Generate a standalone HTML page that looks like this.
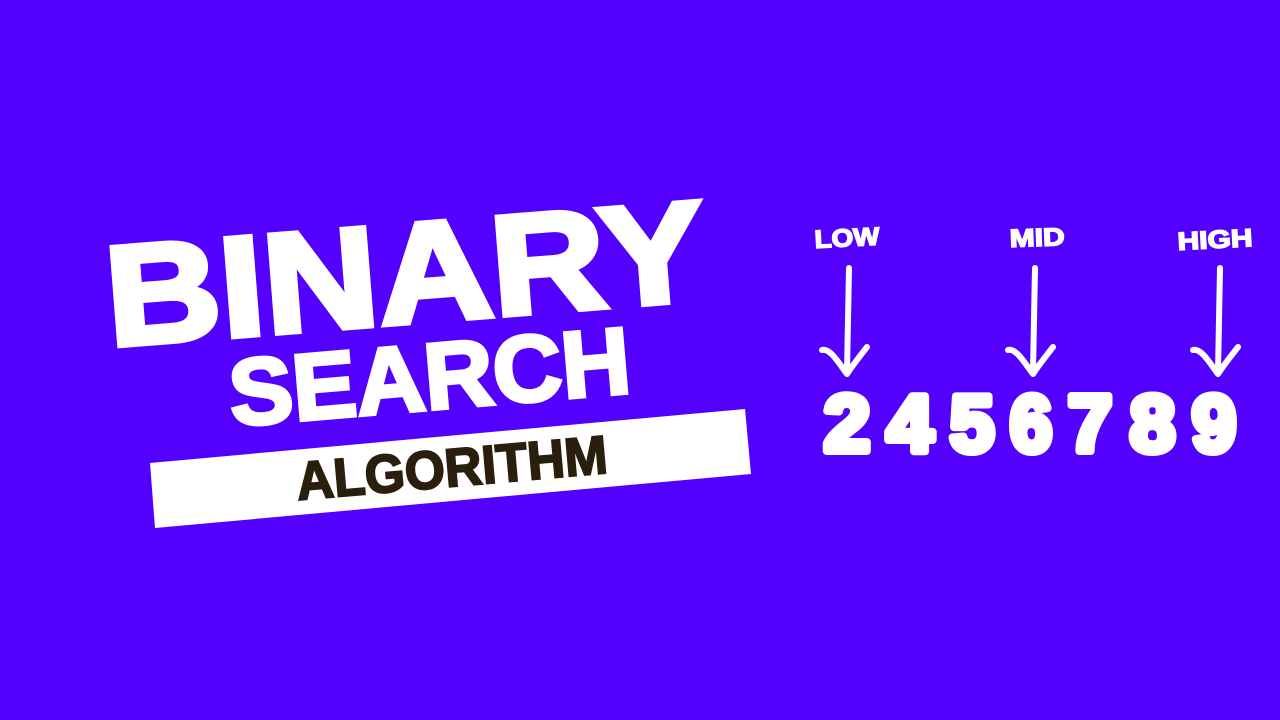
<!DOCTYPE html>
<html><head><meta charset="utf-8"><style>
html,body{margin:0;padding:0;background:#5400ff;width:1280px;height:720px;overflow:hidden}
svg{display:block}
text{font-family:"Liberation Sans",sans-serif;font-weight:bold}
</style></head><body>
<svg width="1280" height="720" viewBox="0 0 1280 720">
<rect width="1280" height="720" fill="#5400ff"/>
<g transform="rotate(-4.5 110 346)">
<text x="110" y="346" font-size="142" fill="#fff" stroke="#fff" stroke-width="6" stroke-linejoin="miter" textLength="600" lengthAdjust="spacingAndGlyphs">BINARY</text>
</g>
<g transform="rotate(-4.8 232 426)">
<text x="232" y="426" font-size="94" fill="#fff" stroke="#fff" stroke-width="4" textLength="402" lengthAdjust="spacingAndGlyphs">SEARCH</text>
</g>
<polygon points="150,463 745,409 751,474 155,528" fill="#fff"/>
<g transform="rotate(-5 298 500)">
<text x="298" y="500" font-size="54" fill="#2a1e0c" stroke="#2a1e0c" stroke-width="2" textLength="312" lengthAdjust="spacingAndGlyphs">ALGORITHM</text>
</g>
<g fill="#fff" stroke="#fff" stroke-width="1.5">
<text x="815" y="248" font-size="25" transform="rotate(-3 815 248)" textLength="65" lengthAdjust="spacingAndGlyphs">LOW</text>
<text x="1010" y="247" font-size="25" transform="rotate(-2 1010 247)" textLength="55" lengthAdjust="spacingAndGlyphs">MID</text>
<text x="1178" y="250" font-size="25" transform="rotate(-3 1178 250)" textLength="75" lengthAdjust="spacingAndGlyphs">HIGH</text>
</g>
<g fill="none" stroke="#fff" stroke-width="6" stroke-linecap="round" stroke-linejoin="round">
<path d="M849,268 L847,372 M822,350 C830,348 838,362 847,374 C852,366 860,356 867,347"/>
<path d="M1035,268 L1033,372 M1008,350 C1016,348 1024,362 1033,374 C1038,366 1046,356 1053,347"/>
<path d="M1220,268 L1218,372 M1193,350 C1201,348 1209,362 1218,374 C1223,366 1231,356 1238,347"/>
</g>
<g fill="#fff" stroke="#fff" stroke-width="8" stroke-linejoin="round" font-size="80">
<text x="824" y="451" textLength="46" lengthAdjust="spacingAndGlyphs">2</text>
<text x="887" y="451" textLength="46" lengthAdjust="spacingAndGlyphs">4</text>
<text x="950" y="451" textLength="44" lengthAdjust="spacingAndGlyphs">5</text>
<text x="1010" y="451" textLength="42" lengthAdjust="spacingAndGlyphs">6</text>
<text x="1068" y="451" textLength="44" lengthAdjust="spacingAndGlyphs">7</text>
<text x="1130" y="451" textLength="45" lengthAdjust="spacingAndGlyphs">8</text>
<text x="1192" y="451" textLength="44" lengthAdjust="spacingAndGlyphs">9</text>
</g>
</svg>
</body></html>
